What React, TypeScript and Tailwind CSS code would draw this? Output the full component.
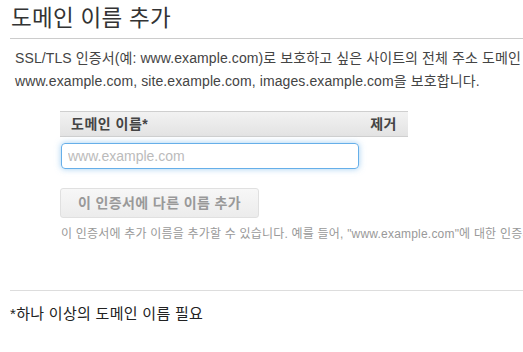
const App = () => {
  return (
    <div
      className="w-[523px] h-[352px] overflow-hidden bg-white text-[#333]"
      style={{ fontFamily: '"Liberation Sans", "Noto Sans CJK KR", sans-serif' }}
    >
      <div className="w-[900px] pl-[10px]">
        {/* 제목 */}
        <h2 className="text-[22.5px] leading-[30px] pt-[4px] pl-[1px] text-[#333] font-normal tracking-[0.3px]">
          도메인 이름 추가
        </h2>
        <div className="mt-[4px] border-t border-[#ccc]" />

        {/* 설명 */}
        <p className="mt-[8px] pl-[5px] text-[14px] leading-[23px] text-[#444] whitespace-nowrap tracking-[0.1px]">
          SSL/TLS 인증서(예: www.example.com)로 보호하고 싶은 사이트의 전체 주소 도메인 이름을 입력합니다. 예를 들어,
          <br />
          www.example.com, site.example.com, images.example.com을 보호합니다.
        </p>

        {/* 도메인 이름 테이블 */}
        <div className="mt-[18px] ml-[50px] w-[348px]">
          <div className="flex items-center justify-between h-[26px] px-[11px] bg-gradient-to-b from-[#f2f2f2] to-[#e3e3e3] border-y border-[#cfcfcf] text-[14px] font-bold text-[#444] tracking-[0.5px]">
            <span>도메인 이름*</span>
            <span>제거</span>
          </div>
          <input
            autoFocus
            placeholder="www.example.com"
            className="mt-[6px] ml-[1px] block w-[298px] h-[26px] px-[6px] text-[14px] rounded-[4px] border border-[#66afe9] shadow-[0_0_6px_rgba(102,175,233,0.6)] outline-none placeholder:text-[#bbb]"
          />
        </div>

        {/* 이름 추가 버튼 */}
        <div className="ml-[50px] mt-[19px]">
          <button className="h-[30px] w-[199px] rounded-[3px] border border-[#e0e0e0] bg-gradient-to-b from-[#f7f7f7] to-[#ececec] text-[14px] font-bold text-[#999] tracking-[0.4px]">
            이 인증서에 다른 이름 추가
          </button>
          <p className="mt-[8px] ml-[1px] text-[12px] leading-[16px] text-[#999] whitespace-nowrap tracking-[0.2px]">
            이 인증서에 추가 이름을 추가할 수 있습니다. 예를 들어, "www.example.com"에 대한 인증서를 요청하는 경우 "example.com"을 추가할 수 있습니다.
          </p>
        </div>

        {/* 하단 */}
        <div className="mt-[48px] border-t border-[#ddd]" />
        <p className="mt-[13px] text-[15px] leading-[19px] text-[#222] tracking-[0.3px]">*하나 이상의 도메인 이름 필요</p>
      </div>
    </div>
  );
};

export default App;
